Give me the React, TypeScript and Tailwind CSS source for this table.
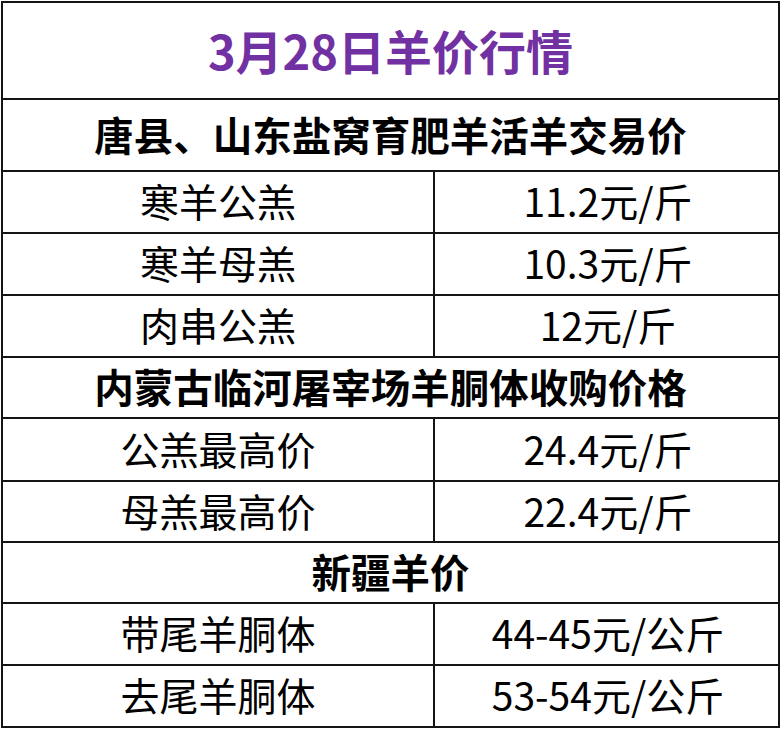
import React from 'react'

type Row = { left: string; right: string; h: string } | { head: string; h: string }

const rows: Row[] = [
  { head: '唐县、山东盐窝育肥羊活羊交易价', h: 'h-[72px]' },
  { left: '寒羊公羔', right: '11.2元/斤', h: 'h-[62px]' },
  { left: '寒羊母羔', right: '10.3元/斤', h: 'h-[62px]' },
  { left: '肉串公羔', right: '12元/斤', h: 'h-[62px]' },
  { head: '内蒙古临河屠宰场羊胴体收购价格', h: 'h-[61px]' },
  { left: '公羔最高价', right: '24.4元/斤', h: 'h-[63px]' },
  { left: '母羔最高价', right: '22.4元/斤', h: 'h-[61px]' },
  { head: '新疆羊价', h: 'h-[61px]' },
  { left: '带尾羊胴体', right: '44-45元/公斤', h: 'h-[62px]' },
  { left: '去尾羊胴体', right: '53-54元/公斤', h: 'h-[60px]' },
]

export default function App() {
  return (
    <div className="w-[782px] h-[745px] bg-white pt-px pl-px font-['Noto_Sans_CJK_SC','Noto_Sans',sans-serif] text-black">
      <div className="w-[779px] border-2 border-[#141414]">
        {/* title */}
        <div className="h-[97px] border-b-2 border-[#141414] flex items-center justify-center pb-[2px] text-[47px] font-bold text-[#7131a2] leading-none">
          3月28日羊价行情
        </div>

        {rows.map((r, i) => {
          const last = i === rows.length - 1
          const line = last ? '' : 'border-b-2 border-[#141414]'
          if ('head' in r) {
            return (
              <div
                key={i}
                className={`${r.h} ${line} flex items-center justify-center pb-[3px] text-[39.5px] font-bold leading-none`}
              >
                {r.head}
              </div>
            )
          }
          return (
            <div key={i} className={`${r.h} ${line} grid grid-cols-[432px_1fr] text-[39px] leading-none`}>
              <div className="border-r-2 border-[#141414] flex items-center justify-center pb-[3px]">{r.left}</div>
              <div className="flex items-center justify-center pb-[3px] pl-[3px]">{r.right}</div>
            </div>
          )
        })}
      </div>
    </div>
  )
}
